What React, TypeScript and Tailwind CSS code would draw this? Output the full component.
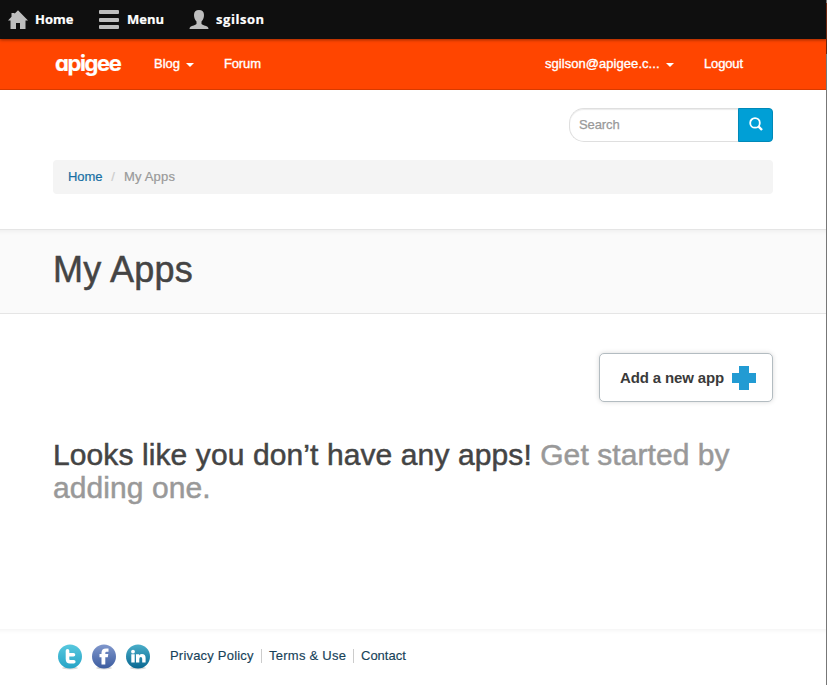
import React from "react";

function Caret({ className = "" }: { className?: string }) {
  return (
    <span
      className={`inline-block h-0 w-0 border-x-4 border-t-4 border-x-transparent border-t-white ${className}`}
    />
  );
}

function AdminBar() {
  return (
    <div className="relative z-10 flex h-[39px] items-center bg-[#0f0f0f] pl-2 font-['Open_Sans','Noto_Sans',sans-serif] text-[13px] font-bold text-white shadow-[0_1px_3px_rgba(0,0,0,0.4)] [-webkit-text-stroke:0.2px_white]">
      <a className="flex w-[91px] items-center gap-[7px]">
        <svg width="20" height="20" viewBox="0 0 20 20" fill="#bebebe">
          <path d="M10 .3 20 10.500H17.500V19H12V13H8V19H2.500V10.500H0L3.500 6.800V3H6.500V3.800Z" />
        </svg>
        Home
      </a>
      <a className="flex w-[90px] items-center gap-2">
        <span className="flex h-[19px] w-5 flex-col justify-between">
          <i className="h-1 rounded-[1px] bg-[#bebebe]" />
          <i className="h-1 rounded-[1px] bg-[#bebebe]" />
          <i className="h-1 rounded-[1px] bg-[#bebebe]" />
        </span>
        Menu
      </a>
      <a className="flex items-center gap-[7px] tracking-[0.55px]">
        <svg width="20" height="20" viewBox="0 0 20 20" fill="#bebebe">
          <path d="M10 0C6.800 0 5 1.800 5 5C5 8 6 10 7.500 11.500V14C6.500 15.200 3 15.700 1.500 16.700C.8 17.200.5 18 .5 19H19.500C19.500 18 19.200 17.200 18.500 16.700C17 15.700 13.500 15.200 12.500 14V11.500C14 10 15 8 15 5C15 1.800 13.200 0 10 0Z" />
        </svg>
        sgilson
      </a>
    </div>
  );
}

function NavBar() {
  return (
    <nav className="flex h-[51px] items-center border-b border-[#d83a00] bg-[#ff4500] pl-[55px] text-[13px] text-white [-webkit-text-stroke:0.35px_white]">
      <a className="w-[99px] pb-[2px] font-[Inter,sans-serif] text-[22px] font-bold leading-6 tracking-[-1.4px] [font-feature-settings:'cv11'] [-webkit-text-stroke:0.2px_white]">
        apigee
      </a>
      <a className="flex w-[70px] items-center">
        Blog
        <Caret className="ml-[6px] mt-[2px]" />
      </a>
      <a className="w-[321px] tracking-[-0.15px]">Forum</a>
      <a className="flex w-[159px] items-center">
        <span className="w-[121px] tracking-[0.05px]">sgilson@apigee.c...</span>
        <Caret className="mt-[2px]" />
      </a>
      <a className="tracking-[-0.15px]">Logout</a>
    </nav>
  );
}

function SearchBox() {
  return (
    <div className="ml-auto flex h-[34px] w-[204px]">
      <div className="flex flex-1 items-center rounded-l-[15px] border border-r-0 border-[#dfdfdf] bg-white pl-[9px] text-[13px] tracking-[-0.1px] text-[#999] shadow-[inset_0_1px_1px_rgba(0,0,0,0.08)] [-webkit-text-stroke:0.25px_#999]">
        Search
      </div>
      <button className="flex w-[35px] items-center justify-center rounded-r-[4px] border border-[#0089b8] bg-[#009fd6] pb-[2px]">
        <svg width="14" height="14" viewBox="0 0 14 14" fill="none" stroke="white">
          <circle cx="6" cy="5.900" r="4.800" strokeWidth="1.800" />
          <path d="m9.400 9.400 3.600 3.600" strokeWidth="2.400" />
        </svg>
      </button>
    </div>
  );
}

function SocialIcons() {
  return (
    <svg width="94" height="26" viewBox="0 0 94 26" className="shrink-0">
      <defs>
        <linearGradient id="twitter" x2="0" y2="1">
          <stop stopColor="#58c8de" />
          <stop offset="1" stopColor="#26a3c6" />
        </linearGradient>
        <linearGradient id="facebook" x2="0" y2="1">
          <stop stopColor="#8097cc" />
          <stop offset="1" stopColor="#3c5c9f" />
        </linearGradient>
        <linearGradient id="linkedin" x2="0" y2="1">
          <stop stopColor="#4aaec9" />
          <stop offset="1" stopColor="#086791" />
        </linearGradient>
      </defs>
      <g fillOpacity=".15">
        <ellipse cx="13" cy="24" rx="8" ry="1.500" />
        <ellipse cx="47" cy="24" rx="8" ry="1.500" />
        <ellipse cx="81" cy="24" rx="8" ry="1.500" />
      </g>
      <circle cx="13" cy="12.500" r="12" fill="url(#twitter)" />
      <circle cx="47" cy="12.500" r="12" fill="url(#facebook)" />
      <circle cx="81" cy="12.500" r="12" fill="url(#linkedin)" />
      <path
        d="M10.500 6.800V15Q10.500 17.800 13 17.800H16.800M10.500 10.800H16.500"
        fill="none"
        stroke="white"
        strokeWidth="3.600"
        strokeLinecap="round"
        strokeLinejoin="round"
      />
      <path d="M51.500 4.500H49Q44.500 4.500 44.500 8.800V10H42.500V13.200H44.500V20.500H48.300V13.200H50.800L51.300 10H48.300V9Q48.300 7.800 49.500 7.800H51.500Z" fill="white" />
      <g fill="white">
        <circle cx="76" cy="7.700" r="1.900" />
        <path d="M74.300 10.300H77.700V18.500H74.300ZM79 10.300H82.200V11.400Q83.200 10.100 85 10.100Q88.600 10.100 88.600 14V18.500H85.200V14.700Q85.200 12.900 83.800 12.900Q82.300 12.900 82.300 14.900V18.500H79Z" />
      </g>
    </svg>
  );
}

export default function App() {
  return (
    <div className="relative flex h-[685px] w-[827px] flex-col overflow-hidden bg-white font-['Liberation_Sans',Arial,sans-serif] text-[#444]">
      <AdminBar />
      <NavBar />
      <section className="h-[139px] pl-[53px] pr-[54px] pt-[18px]">
        <SearchBox />
        <div className="mt-[18px] flex h-[34px] items-center rounded-[4px] bg-[#f4f4f4] px-[15px] text-[13px] text-[#999] [-webkit-text-stroke:0.2px]">
          <a className="tracking-[-0.1px] text-[#176fa3]">Home</a>
          <span className="px-[9px] text-[#ccc]">/</span>
          <span className="tracking-[0.2px]">My Apps</span>
        </div>
      </section>
      <header className="h-[85px] border-y border-[#e5e5e5] bg-[#fafafa] pl-[53px] pt-[20px] shadow-[inset_0_7px_5px_-6px_rgba(0,0,0,0.06)]">
        <h1 className="text-[36px] leading-[40px] tracking-[0.3px] [-webkit-text-stroke:0.5px]">My Apps</h1>
      </header>
      <main className="h-[315px] pl-[53px] pr-[54px] pt-[39px]">
        <button className="ml-auto flex h-[49px] w-[174px] items-center rounded-[5px] border border-[#b3bcc1] bg-white pl-5 text-[15px] font-bold text-[#3a3a3a] shadow-[0_0_5px_rgba(0,0,0,0.15)]">
          <span className="w-[112px] whitespace-nowrap pt-[2px] text-left tracking-[-0.13px]">Add a new app</span>
          <svg width="24" height="24" viewBox="0 0 24 24" className="mt-px" fill="#229bd3">
            <path d="M7 0H17V7H24V17H17V24H7V17H0V7H7Z" />
          </svg>
        </button>
        <h2 className="mt-[36px] w-[720px] text-[30px] leading-[33px] tracking-[0.07px] [-webkit-text-stroke:0.5px]">
          <span className="tracking-[0.1px]">Looks like you don’t have any apps!</span>{" "}
          <span className="text-[#999]">Get started by adding one.</span>
        </h2>
      </main>
      <footer className="flex flex-1 items-start pl-[57px] pt-[15px] text-[13px] text-[#174259] shadow-[inset_0_7px_5px_-6px_rgba(0,0,0,0.06)] [-webkit-text-stroke:0.15px]">
        <SocialIcons />
        <div className="ml-[19px] mt-[5px] flex h-[14px] items-center">
          <a className="w-[91px] tracking-[0.2px]">Privacy Policy</a>
          <a className="flex h-full w-[92px] items-center border-l border-[#ccc] pl-[7px] tracking-[0.25px]">Terms &amp; Use</a>
          <a className="flex h-full items-center border-l border-[#ccc] pl-[7px]">Contact</a>
        </div>
      </footer>
      <div className="absolute right-0 top-0 z-20 h-full w-px bg-[#777]">
        <div className="mt-[3px] h-[51px] bg-[#6b2710]" />
      </div>
    </div>
  );
}
